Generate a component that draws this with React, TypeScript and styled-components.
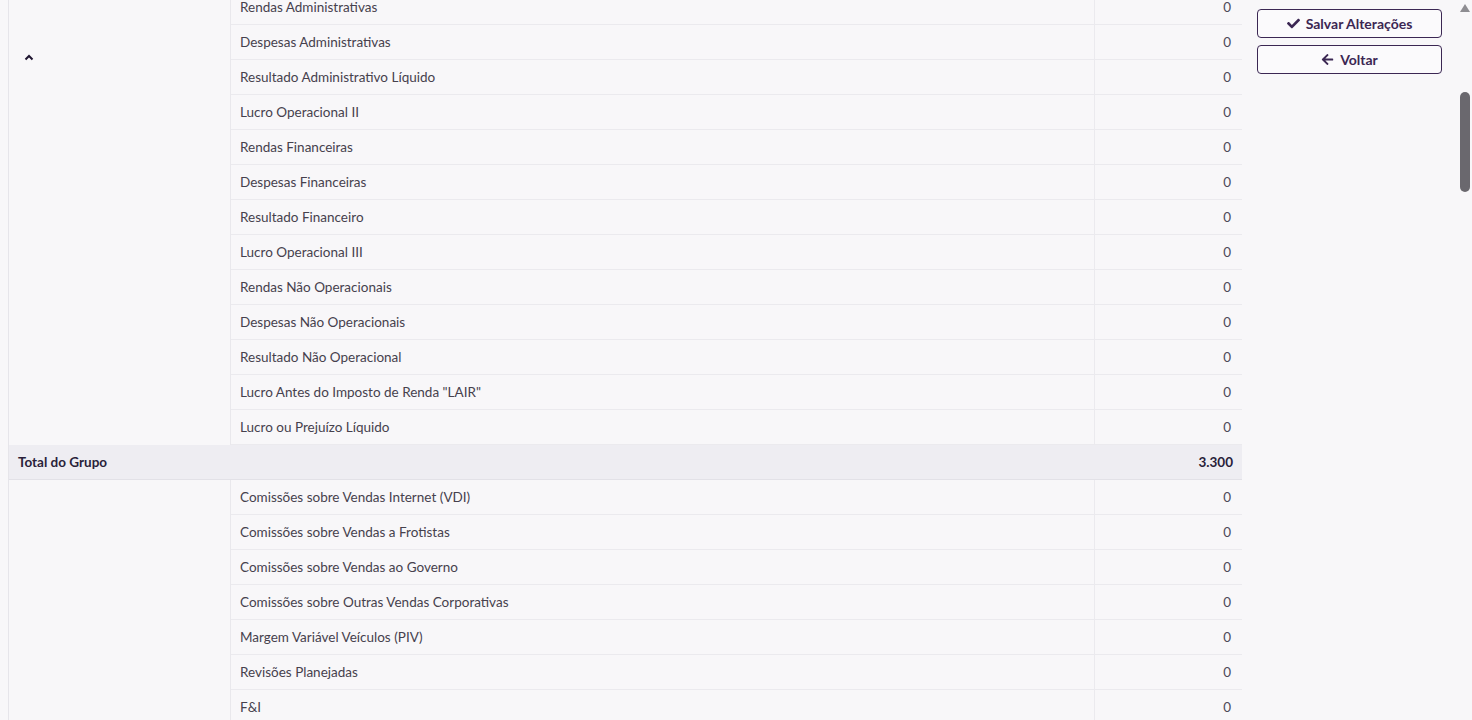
import React from "react";
import styled, { createGlobalStyle } from "styled-components";
import { FaCheck, FaArrowLeft } from "react-icons/fa";

const Global = createGlobalStyle`
  html, body { margin: 0; padding: 0; background: #f8f7f9; overflow: hidden; }
  body { font-family: Lato, "Open Sans", sans-serif; }
`;

const Page = styled.div`
  display: flex;
  height: 720px;
  overflow: hidden;
  background: #f8f7f9;
`;

const Main = styled.div`
  width: 1234px;
  margin-left: 8px;
  margin-top: -10px;
  border-left: 1px solid #e6e5ea;
  box-sizing: border-box;
`;

const Group = styled.div`
  display: flex;
`;

const SideCell = styled.div`
  width: 221px;
  flex-shrink: 0;
  padding: 55px 0 0 15px;
  box-sizing: border-box;
  color: #1f1530;
`;

const Rows = styled.div`
  flex: 1;
  border-left: 1px solid #e9e8ec;
`;

const Row = styled.div`
  display: flex;
  height: 35px;
  border-bottom: 1px solid #ebeaee;
  box-sizing: border-box;
`;

const Label = styled.div`
  flex: 1;
  display: flex;
  align-items: center;
  padding-left: 9px;
  font-size: 13.5px;
  color: #46414d;
  border-right: 1px solid #ebeaee;
`;

const Value = styled.div`
  width: 147px;
  display: flex;
  align-items: center;
  justify-content: flex-end;
  padding-right: 11px;
  box-sizing: border-box;
  font-size: 13.5px;
  color: #4d4a58;
`;

const TotalRow = styled.div`
  display: flex;
  justify-content: space-between;
  align-items: center;
  height: 35px;
  padding: 0 9px 0 9px;
  background: #eeedf2;
  border-bottom: 1px solid #e2e1e7;
  box-sizing: border-box;
  font-weight: 700;
  font-size: 13.5px;
  color: #2a1f3a;
`;

const Side = styled.div`
  width: 185px;
  margin-left: 15px;
  padding-top: 9px;
  display: flex;
  flex-direction: column;
  gap: 7px;
`;

const Button = styled.button`
  height: 29px;
  border: 1.5px solid #3b2753;
  border-radius: 4px;
  background: #fbfafc;
  color: #3b2753;
  font-family: Lato, sans-serif;
  font-weight: 700;
  font-size: 14px;
  display: flex;
  align-items: center;
  justify-content: center;
  gap: 6px;
  cursor: pointer;
  svg { font-size: 13px; }
`;

const Track = styled.div`
  margin-left: auto;
  width: 14px;
  display: flex;
  flex-direction: column;
  align-items: center;
`;

const Arrow = styled.div`
  margin-top: 4px;
  width: 0;
  height: 0;
  border-left: 5px solid transparent;
  border-right: 5px solid transparent;
  border-bottom: 8px solid #8e8d92;
`;

const Thumb = styled.div`
  margin-top: 80px;
  width: 10px;
  height: 100px;
  border-radius: 5px;
  background: #6a686e;
`;

const Chevron = () => (
  <svg width="10" height="7" viewBox="0 0 10 7">
    <path d="M1.5 5.5 L5 2 L8.5 5.5" fill="none" stroke="#1f1530" strokeWidth="2" />
  </svg>
);

const group1 = [
  "Rendas Administrativas",
  "Despesas Administrativas",
  "Resultado Administrativo Líquido",
  "Lucro Operacional II",
  "Rendas Financeiras",
  "Despesas Financeiras",
  "Resultado Financeiro",
  "Lucro Operacional III",
  "Rendas Não Operacionais",
  "Despesas Não Operacionais",
  "Resultado Não Operacional",
  'Lucro Antes do Imposto de Renda "LAIR"',
  "Lucro ou Prejuízo Líquido",
];

const group2 = [
  "Comissões sobre Vendas Internet (VDI)",
  "Comissões sobre Vendas a Frotistas",
  "Comissões sobre Vendas ao Governo",
  "Comissões sobre Outras Vendas Corporativas",
  "Margem Variável Veículos (PIV)",
  "Revisões Planejadas",
  "F&I",
];

export default function App() {
  return (
    <>
      <Global />
      <Page>
        <Main>
          <Group>
            <SideCell>
              <Chevron />
            </SideCell>
            <Rows>
              {group1.map((l) => (
                <Row key={l}>
                  <Label>{l}</Label>
                  <Value>0</Value>
                </Row>
              ))}
            </Rows>
          </Group>
          <TotalRow>
            <span>Total do Grupo</span>
            <span>3.300</span>
          </TotalRow>
          <Group>
            <SideCell />
            <Rows>
              {group2.map((l) => (
                <Row key={l}>
                  <Label>{l}</Label>
                  <Value>0</Value>
                </Row>
              ))}
            </Rows>
          </Group>
        </Main>
        <Side>
          <Button>
            <FaCheck /> Salvar Alterações
          </Button>
          <Button>
            <FaArrowLeft /> Voltar
          </Button>
        </Side>
        <Track>
          <Arrow />
          <Thumb />
        </Track>
      </Page>
    </>
  );
}
